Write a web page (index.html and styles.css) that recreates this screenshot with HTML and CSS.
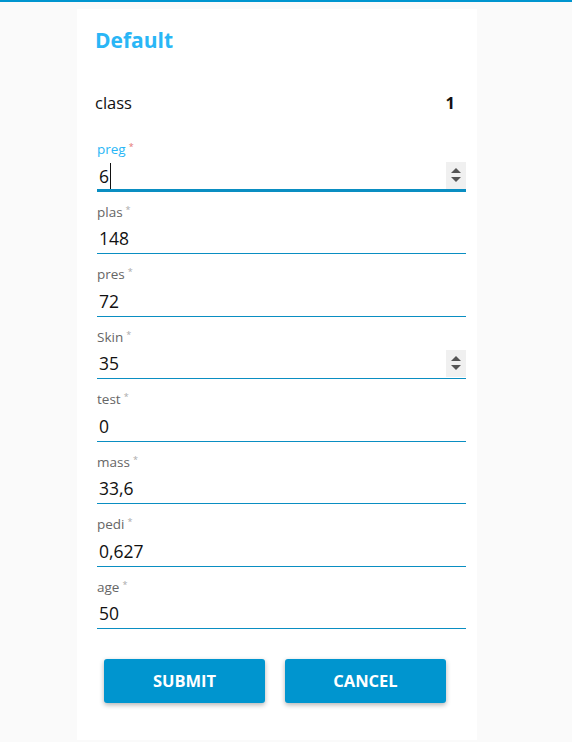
FILE: index.html
```html
<!DOCTYPE html>
<html>
<head>
<meta charset="utf-8">
<link rel="stylesheet" href="styles.css">
</head>
<body>
<div class="topline"></div>
<div class="card">
  <h1 class="title">Default</h1>
  <div class="class-row"><span>class</span><b>1</b></div>
  <div class="fields">
    <div class="field focused">
      <div class="label">preg<span class="req">*</span></div>
      <div class="control"><div class="value">6<span class="caret"></span></div><span class="spin"><i class="up"></i><i class="down"></i></span></div>
    </div>
    <div class="field">
      <div class="label">plas<span class="req">*</span></div>
      <div class="control"><div class="value">148</div></div>
    </div>
    <div class="field">
      <div class="label">pres<span class="req">*</span></div>
      <div class="control"><div class="value">72</div></div>
    </div>
    <div class="field">
      <div class="label">Skin<span class="req">*</span></div>
      <div class="control"><div class="value">35</div><span class="spin"><i class="up"></i><i class="down"></i></span></div>
    </div>
    <div class="field">
      <div class="label">test<span class="req">*</span></div>
      <div class="control"><div class="value">0</div></div>
    </div>
    <div class="field">
      <div class="label">mass<span class="req">*</span></div>
      <div class="control"><div class="value">33,6</div></div>
    </div>
    <div class="field">
      <div class="label">pedi<span class="req">*</span></div>
      <div class="control"><div class="value">0,627</div></div>
    </div>
    <div class="field">
      <div class="label">age<span class="req">*</span></div>
      <div class="control"><div class="value">50</div></div>
    </div>
  </div>
  <div class="actions">
    <button class="btn">SUBMIT</button>
    <button class="btn">CANCEL</button>
  </div>
</div>
</body>
</html>
```
FILE: styles.css
```css
html, body {
  margin: 0;
  padding: 0;
  background: #fafafa;
  font-family: "Open Sans", "Noto Sans", sans-serif;
  color: #111;
}
.topline {
  height: 2px;
  background: #0095cf;
}
.card {
  background: #fff;
  width: 400px;
  height: 731px;
  margin: 7px 0 0 77px;
  box-sizing: border-box;
  padding-top: 16px;
}
.title {
  margin: 0;
  padding-left: 18px;
  font-size: 21px;
  line-height: 30px;
  font-weight: 700;
  color: #29b6f6;
}
.class-row {
  display: flex;
  justify-content: space-between;
  margin-top: 35px;
  padding: 0 22px 0 18px;
  height: 26px;
  line-height: 26px;
  font-size: 16.5px;
  color: #111;
}
.class-row b {
  font-weight: 700;
}
.fields {
  margin-top: 13px;
  padding: 0 11px 0 20px;
}
.field {
  height: 62.5px;
  box-sizing: border-box;
  padding-top: 12px;
  display: flex;
  flex-direction: column;
}
.label {
  font-size: 13.5px;
  line-height: 17px;
  height: 17px;
  color: #666;
}
.req {
  font-size: 9px;
  color: #aaa;
  vertical-align: top;
  margin-left: 3px;
  line-height: 12px;
}
.focused .label {
  color: #29b6f6;
}
.focused .req {
  color: #e57373;
}
.control {
  flex: 1;
  display: flex;
  align-items: center;
  border-bottom: 1px solid #0a8ec2;
  box-sizing: border-box;
}
.focused .control {
  border-bottom: 3px solid #0a8ec2;
}
.value {
  flex: 1;
  font-size: 17.5px;
  line-height: 26px;
  padding: 3px 0 0 2px;
  color: #111;
  display: flex;
  align-items: center;
}
.focused .value {
  padding-top: 5px;
}
.caret {
  display: inline-block;
  width: 1px;
  height: 26px;
  background: #111;
  margin-left: 1px;
}
.spin {
  width: 20px;
  height: 27px;
  background: #f0f0f0;
  display: flex;
  flex-direction: column;
  align-items: center;
  justify-content: center;
  gap: 4px;
  margin-top: 3px;
}
.spin i {
  display: block;
  width: 0;
  height: 0;
  border-left: 5px solid transparent;
  border-right: 5px solid transparent;
}
.spin .up {
  border-bottom: 5px solid #555;
}
.spin .down {
  border-top: 5px solid #555;
}
.actions {
  display: flex;
  gap: 20px;
  padding-left: 27px;
  margin-top: 29.5px;
}
.btn {
  width: 161px;
  height: 44px;
  border: 0;
  border-radius: 3px;
  background: #0095cf;
  color: #fff;
  font-family: "Open Sans", "Noto Sans", sans-serif;
  font-weight: 700;
  font-size: 16.5px;
  box-shadow: 0 2px 5px rgba(0, 0, 0, 0.3);
  padding: 0;
}
```
